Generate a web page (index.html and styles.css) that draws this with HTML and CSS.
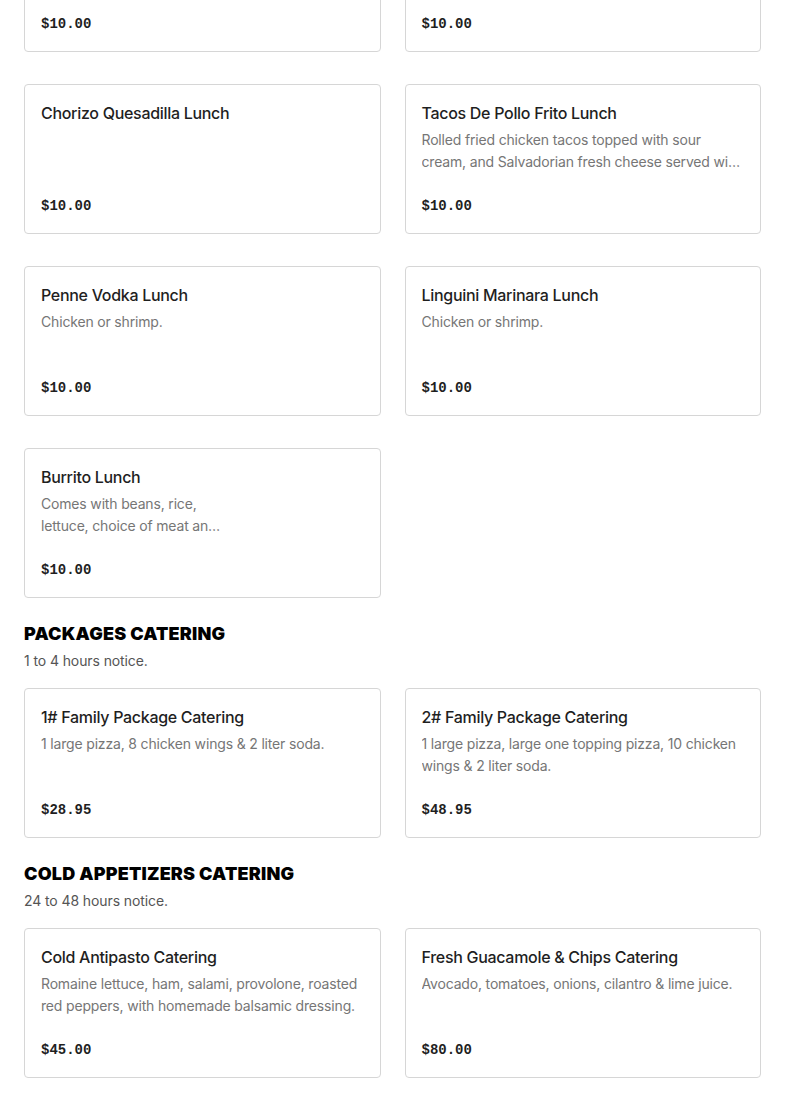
FILE: index.html
```html
<!DOCTYPE html>
<html>
<head>
<meta charset="utf-8">
<link rel="stylesheet" href="styles.css">
</head>
<body>
<main class="menu">
  <section class="section section-first">
    <div class="grid">
      <div class="card"><div class="card-body"><h3 class="title">Pupusa Lunch</h3><p class="desc"></p></div><div class="price">$10.00</div></div>
      <div class="card"><div class="card-body"><h3 class="title">Enchiladas Lunch</h3><p class="desc"></p></div><div class="price">$10.00</div></div>
      <div class="card"><div class="card-body"><h3 class="title">Chorizo Quesadilla Lunch</h3></div><div class="price">$10.00</div></div>
      <div class="card"><div class="card-body"><h3 class="title">Tacos De Pollo Frito Lunch</h3><p class="desc">Rolled fried chicken tacos topped with sour cream, and Salvadorian fresh cheese served with rice and beans.</p></div><div class="price">$10.00</div></div>
      <div class="card"><div class="card-body"><h3 class="title">Penne Vodka Lunch</h3><p class="desc">Chicken or shrimp.</p></div><div class="price">$10.00</div></div>
      <div class="card"><div class="card-body"><h3 class="title">Linguini Marinara Lunch</h3><p class="desc">Chicken or shrimp.</p></div><div class="price">$10.00</div></div>
      <div class="card"><div class="card-body"><h3 class="title">Burrito Lunch</h3><p class="desc desc-narrow">Comes with beans, rice, lettuce, choice of meat and cheese.</p></div><div class="price">$10.00</div></div>
    </div>
  </section>

  <section class="section">
    <h2 class="section-title">PACKAGES CATERING</h2>
    <p class="section-note">1 to 4 hours notice.</p>
    <div class="grid">
      <div class="card"><div class="card-body"><h3 class="title">1# Family Package Catering</h3><p class="desc">1 large pizza, 8 chicken wings &amp; 2 liter soda.</p></div><div class="price">$28.95</div></div>
      <div class="card"><div class="card-body"><h3 class="title">2# Family Package Catering</h3><p class="desc">1 large pizza, large one topping pizza, 10 chicken wings &amp; 2 liter soda.</p></div><div class="price">$48.95</div></div>
    </div>
  </section>

  <section class="section">
    <h2 class="section-title">COLD APPETIZERS CATERING</h2>
    <p class="section-note">24 to 48 hours notice.</p>
    <div class="grid">
      <div class="card"><div class="card-body"><h3 class="title">Cold Antipasto Catering</h3><p class="desc">Romaine lettuce, ham, salami, provolone, roasted red peppers, with homemade balsamic dressing.</p></div><div class="price">$45.00</div></div>
      <div class="card"><div class="card-body"><h3 class="title">Fresh Guacamole &amp; Chips Catering</h3><p class="desc">Avocado, tomatoes, onions, cilantro &amp; lime juice.</p></div><div class="price">$80.00</div></div>
    </div>
  </section>
</main>
</body>
</html>
```

FILE: styles.css
```css
* { box-sizing: border-box; }
html, body { margin: 0; padding: 0; background: #fff; }
body {
  font-family: Inter, "Noto Sans", "Liberation Sans", sans-serif;
  color: #1f1f1f;
  overflow: hidden;
}
.menu {
  padding: 0 24px;
}
.section {
  margin-top: 24px;
}
.section-first {
  margin-top: -98px;
}
.grid {
  display: grid;
  grid-template-columns: 1fr 1fr;
  column-gap: 24px;
  row-gap: 32px;
}
.card {
  height: 150px;
  border: 1px solid #d6d6d6;
  border-radius: 4px;
  padding: 16px 16px 15px;
  display: flex;
  flex-direction: column;
  justify-content: space-between;
  background: #fff;
}
.title {
  margin: 0;
  font-size: 16px;
  line-height: 24px;
  font-weight: 500;
  color: #1f1f1f;
  letter-spacing: -0.3px;
}
.desc {
  margin: 4px 0 0;
  font-size: 14px;
  line-height: 22px;
  color: #767676;
  letter-spacing: -0.17px;
  display: -webkit-box;
  -webkit-line-clamp: 2;
  -webkit-box-orient: vertical;
  overflow: hidden;
}
.desc:empty { display: none; }
.desc-narrow { max-width: 185px; }
.price {
  font-family: "Liberation Mono", "DejaVu Sans Mono", monospace;
  font-weight: 700;
  font-size: 14px;
  line-height: 24px;
  color: #1f1f1f;
}
.section-title {
  margin: 0;
  font-size: 18px;
  line-height: 24px;
  font-weight: 900;
  color: #000;
  letter-spacing: 0.2px;
}
.section-note {
  margin: 4px 0 16px;
  font-size: 14px;
  line-height: 22px;
  color: #555;
  letter-spacing: -0.1px;
}
```
